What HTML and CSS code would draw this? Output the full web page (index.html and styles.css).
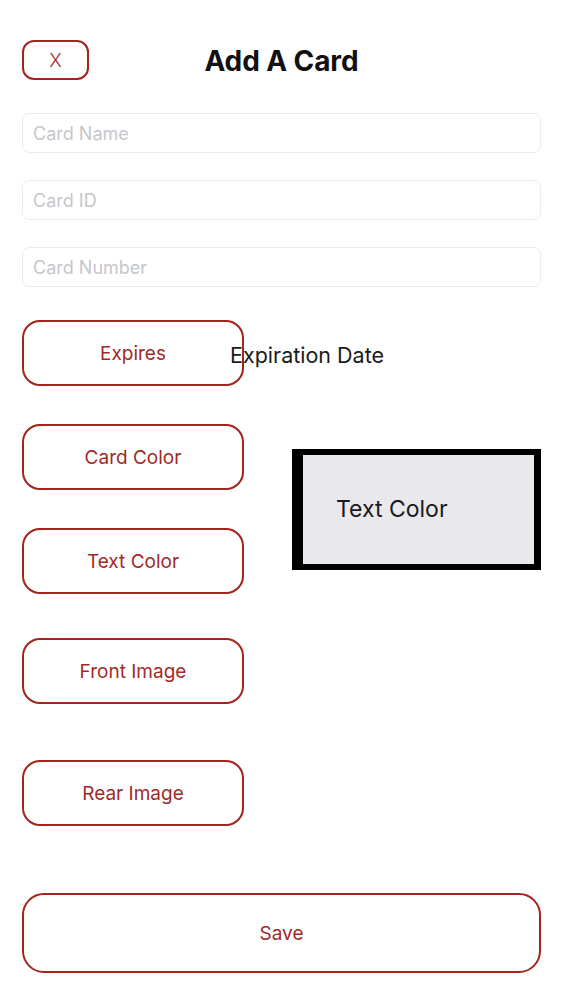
FILE: index.html
```html
<!DOCTYPE html>
<html>
<head>
<meta charset="utf-8">
<link rel="stylesheet" href="styles.css">
</head>
<body>
<div class="page">
  <header class="header">
    <button class="btn btn-close">X</button>
    <h1 class="title">Add A Card</h1>
    <span></span>
  </header>
  <div class="fields">
    <div class="field">Card Name</div>
    <div class="field">Card ID</div>
    <div class="field">Card Number</div>
  </div>
  <div class="expires-row">
    <button class="btn btn-side">Expires</button>
    <span class="exp-label">Expiration Date</span>
  </div>
  <div class="color-grid">
    <button class="btn btn-side btn-card-color">Card Color</button>
    <button class="btn btn-side btn-text-color">Text Color</button>
    <div class="preview"><span class="preview-text">Text Color</span></div>
  </div>
  <button class="btn btn-side btn-front">Front Image</button>
  <button class="btn btn-side btn-rear">Rear Image</button>
  <button class="btn btn-save">Save</button>
</div>
</body>
</html>
```
FILE: styles.css
```css
* { box-sizing: border-box; }
html, body { margin: 0; padding: 0; background: #ffffff; }
body { font-family: Inter, "Liberation Sans", Arial, sans-serif; }
.page {
  padding: 40px 22px 0 22px;
  display: flex;
  flex-direction: column;
  align-items: flex-start;
}
.header {
  width: 100%;
  display: grid;
  grid-template-columns: 1fr auto 1fr;
  align-items: center;
  height: 40px;
}
.btn {
  background: #fff;
  border: 2.5px solid #a3241b;
  color: #a22a28;
  font-family: Inter, "Liberation Sans", Arial, sans-serif;
  font-size: 19px;
  padding: 0;
  margin: 0;
  cursor: pointer;
}
.btn-close {
  width: 67px;
  height: 40px;
  border-radius: 12px;
  font-size: 19px;
  font-weight: 300;
  justify-self: start;
}
.title {
  margin: 2px 0 0 0;
  font-size: 28px;
  font-weight: 700;
  color: #111;
  letter-spacing: -0.1px;
}
.fields {
  width: 100%;
  display: flex;
  flex-direction: column;
  gap: 27px;
  margin-top: 33px;
}
.field {
  height: 40px;
  border: 1px solid #ececee;
  border-radius: 7px;
  padding-left: 10px;
  display: flex;
  align-items: center;
  color: #c6c6cb;
  font-size: 18px;
}
.expires-row {
  display: flex;
  align-items: center;
  margin-top: 33px;
}
.btn-side {
  width: 222px;
  height: 66px;
  border-radius: 18px;
}
.exp-label {
  margin-left: -14px;
  font-size: 21.5px;
  color: #1a1a1a;
  margin-top: 4px;
}
.color-grid {
  width: 100%;
  display: grid;
  grid-template-columns: 222px 1fr;
  row-gap: 38px;
  margin-top: 38px;
}
.btn-card-color { grid-column: 1; grid-row: 1; }
.btn-text-color { grid-column: 1; grid-row: 2; }
.preview {
  grid-column: 2;
  grid-row: 1 / span 2;
  align-self: center;
  justify-self: end;
  width: 249px;
  height: 121px;
  border-style: solid;
  border-color: #000;
  border-width: 6px 7px 6px 11px;
  background: #e9e8ec;
  display: flex;
  align-items: center;
  padding-left: 33px;
}
.preview-text {
  font-size: 23px;
  color: #1a1a1a;
}
.btn-front { margin-top: 44px; }
.btn-rear { margin-top: 56px; }
.btn-save {
  width: 100%;
  height: 80px;
  border-radius: 22px;
  margin-top: 67px;
}
```
